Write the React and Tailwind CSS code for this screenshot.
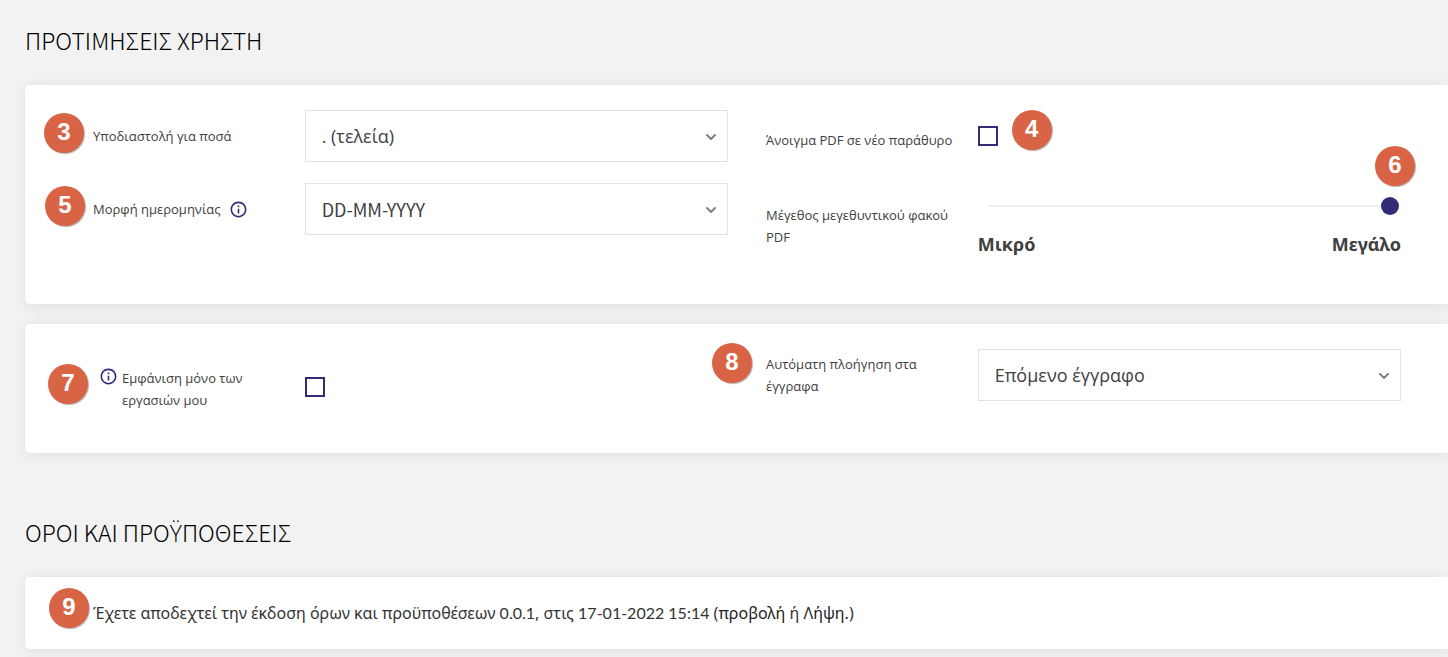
import React, { useState } from 'react'
import { ChevronDown } from 'lucide-react'
import { MdInfoOutline } from 'react-icons/md'

const Badge = ({ number, className }) => (
  <span
    className={`absolute flex h-10 w-10 items-center justify-center rounded-full bg-[#d96445] pb-[2px] font-['Liberation_Sans',sans-serif] text-2xl font-bold text-white shadow-[1px_1px_1px_rgba(0,0,0,0.3)] ${className}`}
  >
    {number}
  </span>
)

const Heading = ({ children, className }) => (
  <h1 className={`pb-[29px] font-['Noto_Sans_CJK_SC','Open_Sans',sans-serif] text-[23px] font-light leading-8 text-black ${className}`}>
    {children}
  </h1>
)

const Card = ({ children, className }) => (
  <div className={`rounded-l-[5px] bg-white pl-[68px] pr-[47px] shadow-[0_2px_16px_rgba(0,0,0,0.08)] ${className}`}>
    {children}
  </div>
)

const Select = ({ id, options, className = "font-['Open_Sans',sans-serif]" }) => (
  <div className="relative col-span-2">
    <select
      id={id}
      className={`h-[52px] w-full appearance-none border border-[#e2e2e2] bg-white px-4 text-[18px] text-[#404040] outline-none ${className}`}
    >
      {options.map((option) => (
        <option key={option}>{option}</option>
      ))}
    </select>
    <ChevronDown size={16} strokeWidth={3} className="pointer-events-none absolute right-[9px] top-[19px] text-[#808080]" />
  </div>
)

const Checkbox = ({ id }) => (
  <input
    type="checkbox"
    id={id}
    className="block h-5 w-5 appearance-none border-2 border-[#322b78] bg-white checked:bg-[#322b78]"
  />
)

const App = () => {
  const [lensSize, setLensSize] = useState(100)

  return (
    <main className="min-h-screen overflow-hidden bg-[#f2f2f2] pb-2 pl-[25px] font-['Open_Sans',sans-serif] text-[13px] leading-[22px] text-[#404040]">
      <Heading className="pt-6">ΠΡΟΤΙΜΗΣΕΙΣ ΧΡΗΣΤΗ</Heading>

      <Card className="pb-12 pt-[25px]">
        <div className="grid grid-cols-2 gap-x-[38px]">
          <div className="flex flex-col gap-[21px]">
            <div className="relative grid grid-cols-3 items-center">
              <Badge number="3" className="-left-[49px] top-[3px]" />
              <label htmlFor="decimal">Υποδιαστολή για ποσά</label>
              <Select id="decimal" options={['. (τελεία)', ', (κόμμα)']} />
            </div>
            <div className="relative grid grid-cols-3 items-center">
              <Badge number="5" className="-left-12 top-[3px]" />
              <label htmlFor="dateFormat" className="flex items-center gap-2">
                Μορφή ημερομηνίας
                <MdInfoOutline size={19} className="shrink-0 text-[#322b78]" />
              </label>
              <Select
                id="dateFormat"
                options={['DD-MM-YYYY', 'MM-DD-YYYY', 'YYYY-MM-DD']}
                className="font-['Noto_Sans_CJK_SC',sans-serif]"
              />
            </div>
          </div>

          <div className="flex flex-col gap-[34px]">
            <div className="grid h-[52px] grid-cols-3 items-center">
              <label htmlFor="newWindow" className="whitespace-nowrap pt-2">Άνοιγμα PDF σε νέο παράθυρο</label>
              <div className="relative col-span-2">
                <Checkbox id="newWindow" />
                <Badge number="4" className="-top-4 left-[34px]" />
              </div>
            </div>
            <div className="grid grid-cols-3 items-center">
              <label htmlFor="lensSize" className="pr-5">Μέγεθος μεγεθυντικού φακού PDF</label>
              <div className="relative col-span-2">
                <Badge number="6" className="-right-[14px] -top-[50px]" />
                <div className="flex pl-[10px] pr-[2px]">
                  <input
                    type="range"
                    id="lensSize"
                    value={lensSize}
                    onChange={(e) => setLensSize(e.target.value)}
                    className="h-5 w-full appearance-none bg-transparent [&::-webkit-slider-runnable-track]:h-[2px] [&::-webkit-slider-runnable-track]:bg-[#f0f0f0] [&::-webkit-slider-thumb]:-mt-2 [&::-webkit-slider-thumb]:h-[18px] [&::-webkit-slider-thumb]:w-[18px] [&::-webkit-slider-thumb]:appearance-none [&::-webkit-slider-thumb]:rounded-full [&::-webkit-slider-thumb]:bg-[#322b78]"
                  />
                </div>
                <div className="flex justify-between pt-4 font-['Noto_Sans',sans-serif] text-[18px] font-bold leading-6">
                  <span>Μικρό</span>
                  <span>Μεγάλο</span>
                </div>
              </div>
            </div>
          </div>
        </div>
      </Card>

      <Card className="mt-5 pb-[42px] pt-[25px]">
        <div className="grid grid-cols-2 items-start gap-x-[38px]">
          <div className="relative grid grid-cols-3 items-center pt-[14px]">
            <Badge number="7" className="-left-[45px] top-[15px]" />
            <label htmlFor="myTasks" className="flex gap-1 pl-[6px] pt-1">
              <MdInfoOutline size={19} className="shrink-0 text-[#322b78]" />
              <span className="w-32">Εμφάνιση μόνο των εργασιών μου</span>
            </label>
            <div className="col-span-2">
              <Checkbox id="myTasks" />
            </div>
          </div>
          <div className="relative grid grid-cols-3 items-center">
            <Badge number="8" className="-left-[54px] -top-[6px]" />
            <label htmlFor="navigation" className="pr-5">Αυτόματη πλοήγηση στα έγγραφα</label>
            <Select id="navigation" options={['Επόμενο έγγραφο', 'Λίστα εγγράφων']} />
          </div>
        </div>
      </Card>

      <Heading className="pt-[63px]">ΟΡΟΙ ΚΑΙ ΠΡΟΫΠΟΘΕΣΕΙΣ</Heading>

      <Card className="relative py-6">
        <Badge number="9" className="left-6 top-[11px]" />
        <p className="font-['Noto_Sans',sans-serif] text-[16px] leading-6 text-[#333]">
          Έχετε αποδεχτεί την έκδοση όρων και προϋποθέσεων <span className="font-['Lato',sans-serif]">0.0.1</span>, στις{' '}
          <span className="font-['Lato',sans-serif]">17-01-2022 15:14</span> (
          <a href="#view" className="text-[#222]">προβολή</a> ή <a href="#download" className="text-[#222]">Λήψη.</a>)
        </p>
      </Card>
    </main>
  )
}

export default App
